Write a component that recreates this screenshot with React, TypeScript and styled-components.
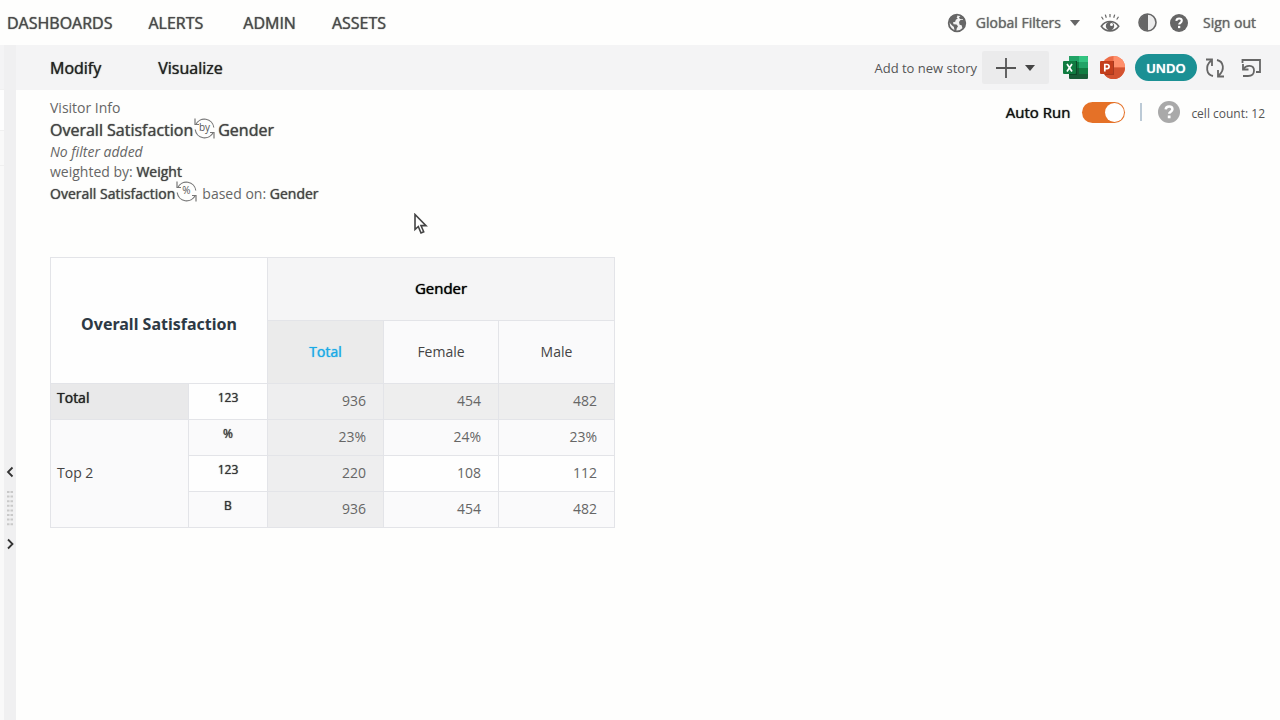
import React from "react";
import styled, { createGlobalStyle, css } from "styled-components";

const GlobalStyle = createGlobalStyle`
  *, *::before, *::after { box-sizing: border-box; }
  body {
    margin: 0;
    background: #fefefd;
    color: #4a4a4a;
    font-family: "Open Sans", "Noto Sans", sans-serif;
    font-size: 14px;
  }
  button { font: inherit; color: inherit; border: 0; padding: 0; background: none; cursor: pointer; }
  a { color: inherit; text-decoration: none; }
  svg { display: block; flex: none; }
`;

const heavy = css`
  text-shadow: 0 0 1px currentColor;
`;

const Page = styled.div`
  display: flex;
  flex-direction: column;
  min-height: 100vh;
`;

const TopBar = styled.header`
  display: flex;
  align-items: center;
  justify-content: space-between;
  height: 45px;
  padding: 0 24px 0 7px;
`;

const Nav = styled.nav`
  display: flex;
  gap: 36px;
  font-size: 16px;
  line-height: 22px;
  ${heavy}
`;

const NavLink = styled.a<{ $wide?: boolean }>`
  margin-right: ${(p) => (p.$wide ? "4px" : "0")};
`;

const Account = styled.div`
  display: flex;
  align-items: center;
  color: #666;
  line-height: 22px;
  ${heavy}
`;

const FilterButton = styled.button`
  display: flex;
  align-items: center;
  gap: 9px;
  margin-right: 20px;
  text-shadow: inherit;
`;

const IconButton = styled.button<{ $gap: number }>`
  margin-right: ${(p) => p.$gap}px;
`;

const Workspace = styled.div`
  display: flex;
  flex: 1;
`;

const Sliver = styled.div`
  display: flex;
  flex-direction: column;
  width: 4px;
  background: #f9f9f9;
`;

const SliverBlock = styled.div<{ $height: number; $color: string }>`
  height: ${(p) => p.$height}px;
  background: ${(p) => p.$color};
  border-bottom: 1px solid #f0f0f0;
`;

const Rail = styled.aside`
  display: flex;
  flex-direction: column;
  align-items: center;
  gap: 12px;
  width: 12px;
  padding-top: 421px;
  background: #f0f0f1;
  color: #333;
`;

const Main = styled.main`
  position: relative;
  flex: 1;
  min-width: 0;
`;

const Toolbar = styled.div`
  display: flex;
  align-items: center;
  justify-content: space-between;
  height: 45px;
  padding: 0 19px 0 34px;
  background: #f4f4f5;
`;

const Tabs = styled.div`
  display: flex;
  gap: 57px;
  color: #222;
  font-size: 16px;
  line-height: 22px;
`;

const Tab = styled.button`
  ${heavy}
`;

const Actions = styled.div`
  display: flex;
  align-items: center;
  color: #555;
  font-size: 13px;
`;

const StoryButton = styled.button`
  display: flex;
  align-items: center;
  justify-content: center;
  gap: 9px;
  width: 67px;
  height: 33px;
  margin: 0 14px 0 5px;
  border-radius: 2px;
  background: #ebebec;
  color: #444;
`;

const UndoButton = styled.button`
  width: 62px;
  height: 27px;
  margin-right: 8px;
  border-radius: 14px;
  background: #1b9094;
  color: #fff;
  font-weight: 600;
  ${heavy}
`;

const Summary = styled.section`
  display: flex;
  justify-content: space-between;
  align-items: flex-start;
  padding: 6px 15px 0 34px;
`;

const Lines = styled.div`
  display: flex;
  flex-direction: column;
  color: #666;
`;

const Line = styled.div<{ $title?: boolean; $italic?: boolean }>`
  display: flex;
  align-items: center;
  height: ${(p) => (p.$title ? 24 : p.$italic ? 18 : 22)}px;
  font-size: ${(p) => (p.$title ? 16 : 14)}px;
  font-style: ${(p) => (p.$italic ? "italic" : "normal")};
  white-space: pre;
`;

const Strong = styled.span`
  color: #444;
  ${heavy}
`;

const SwapButton = styled.button<{ $after: number }>`
  margin: 0 ${(p) => p.$after}px 4px 1px;
`;

const RunOptions = styled.div`
  display: flex;
  align-items: center;
  padding-top: 5px;
`;

const RunLabel = styled.label`
  display: flex;
  align-items: center;
  gap: 12px;
  color: #111;
  font-size: 15px;
  line-height: 22px;
  ${heavy}
`;

const Switch = styled.input`
  appearance: none;
  width: 43px;
  height: 21px;
  margin: 0;
  padding: 1px;
  border-radius: 11px;
  background: #e57127;
  display: flex;
  justify-content: flex-start;
  &:checked { justify-content: flex-end; }
  &::before {
    content: "";
    width: 19px;
    height: 19px;
    border-radius: 50%;
    background: #fff;
  }
`;

const Divider = styled.span`
  width: 2px;
  height: 18px;
  margin: 0 16px 0 15px;
  background: #bccad6;
`;

const CellCount = styled.span`
  padding-top: 3px;
  margin-left: 11px;
  font-size: 12px;
  line-height: 16px;
  color: #555;
`;

const Grid = styled.table`
  width: 565px;
  margin: 53px 0 0 34px;
  border-collapse: collapse;
  table-layout: fixed;
  th, td { border: 1px solid #e3e4e8; padding: 0 0 2px; font-weight: 400; }
`;

const CornerCell = styled.th`
  && { padding-top: 8px; font-weight: 700; }
  background: #fefefe;
  color: #2d3944;
  font-family: "Noto Sans", sans-serif;
  font-size: 16px;
`;

const GroupHead = styled.th`
  height: 63px;
  background: #f5f5f6;
  color: #000;
  font-size: 15px;
  ${heavy}
`;

const ColumnHead = styled.th<{ $total?: boolean }>`
  height: 63px;
  background: ${(p) => (p.$total ? "#ebebeb" : "#fafafb")};
  color: ${(p) => (p.$total ? "#1aaae6" : "#444")};
  ${(p) => p.$total && heavy}
`;

const RowHead = styled.th<{ $total?: boolean }>`
  && { padding: ${(p) => (p.$total ? "0 6px 8px" : "0 6px 2px")}; }
  background: ${(p) => (p.$total ? "#e9e9ea" : "#fafafb")};
  color: ${(p) => (p.$total ? "#222" : "#444")};
  text-align: left;
  ${(p) => p.$total && heavy}
`;

const MeasureHead = styled.th<{ $shade?: boolean }>`
  && { padding-bottom: 9px; }
  background: ${(p) => (p.$shade ? "#fafafb" : "#fefefe")};
  color: #333;
  font-size: 12px;
  ${heavy}
`;

const Value = styled.td<{ $tone: string }>`
  && { padding-right: 17px; }
  height: 36px;
  background: ${(p) => p.$tone};
  color: #666;
  text-align: right;
`;

const Pointer = styled.svg`
  position: absolute;
  left: 398px;
  top: 168px;
`;

const Caret = () => (
  <svg width="10" height="6" viewBox="0 0 10 6" aria-hidden="true">
    <path d="M0 0h10L5 6z" fill="currentColor" />
  </svg>
);

const HelpIcon = ({ size, color }: { size: number; color: string }) => (
  <svg width={size} height={size} viewBox="0 0 20 20" aria-hidden="true">
    <circle cx="10" cy="10" r="10" fill={color} />
    <path d="M7 7.7C7.2 5.7 8.4 5 10.1 5c1.8 0 3 1 3 2.5 0 2.3-2.9 2.2-2.9 4.2" fill="none" stroke="#fff" strokeWidth="2.3" />
    <rect x="8.9" y="13.2" width="2.5" height="2.5" fill="#fff" />
  </svg>
);

const GlobeIcon = () => (
  <svg width="20" height="20" viewBox="0 0 20 20" aria-hidden="true">
    <circle cx="10" cy="10" r="8.3" fill="#f3f3f3" stroke="#666" strokeWidth="1.8" />
    <path d="M2 7C3 4 6 1.6 9 1.500l1.600 1.300-1 1.700 1.200 1-2 1.200-.6 2-2.200.6.5 1.900 3 .3 1.500 1.800-1.200 2-.7 3.200-1.600-.8-.6-3.800-2.300-1.800L2 9z" fill="#666" />
    <path d="M12 4.200l2.300-1.700 2.800 2.800 1.400 4.300-.8 4-2.200 1.700-.9-3-2-.6-.6-2.600 1.500-2 2.200-.2.2-1-1.800.3-1.400-.5z" fill="#666" />
  </svg>
);

const EyeIcon = () => (
  <svg width="20" height="20" viewBox="0 0 20 20" fill="none" stroke="#666" aria-hidden="true">
    <path d="M1.500 3.700l1.800 2.800M5.300 1.600l1 3.200M10 1v3.200M14.700 1.600l-1 3.200M18.500 3.700l-1.800 2.800" strokeWidth="1.200" />
    <path d="M1.300 13.200C3.600 9.900 6.600 8.500 10 8.500s6.400 1.400 8.700 4.700c-2.300 3.300-5.300 4.700-8.700 4.700S3.600 16.500 1.300 13.200z" strokeWidth="1.600" />
    <circle cx="10" cy="13" r="4.200" fill="#666" stroke="none" />
    <circle cx="11.500" cy="11.600" r="1.500" fill="#fff" stroke="none" />
  </svg>
);

const ContrastIcon = () => (
  <svg width="19" height="19" viewBox="0 0 19 19" aria-hidden="true">
    <circle cx="9.500" cy="9.500" r="8.500" fill="#ececec" stroke="#666" strokeWidth="1.600" />
    <path d="M10 1a8.500 8.500 0 0 0 0 17z" fill="#666" />
  </svg>
);

const ExcelIcon = () => (
  <svg width="25" height="23" viewBox="0 0 25 23" aria-hidden="true">
    <rect x="6" y="0" width="19" height="23" rx="1" fill="#185c37" />
    <path d="M7 0h9v6H6V1z" fill="#21a366" />
    <path d="M16 0h8l1 1v5h-9z" fill="#33c481" />
    <rect x="6" y="6" width="10" height="6" fill="#107c41" />
    <rect x="16" y="6" width="9" height="6" fill="#21a366" />
    <rect x="16" y="12" width="9" height="6" fill="#107c41" />
    <rect x="6" y="5" width="8" height="14" fill="#0b4a28" />
    <rect x="0" y="5" width="13" height="13" rx="1" fill="#107c41" />
    <path d="M4 8l5 7.500M9 8l-5 7.500" stroke="#fff" strokeWidth="1.700" />
  </svg>
);

const PowerPointIcon = () => (
  <svg width="25" height="23" viewBox="0 0 25 23" aria-hidden="true">
    <circle cx="13.500" cy="11.500" r="11.500" fill="#ed6c47" />
    <path d="M13.500 0A11.500 11.500 0 0 1 25 11.500H13.500z" fill="#ff8f6b" />
    <path d="M2 11.500h23a11.500 11.500 0 0 1-23 0z" fill="#d35230" />
    <path d="M4 5h10v14H5z" fill="#a83a1f" />
    <rect x="0" y="5" width="13" height="13" rx="1" fill="#c43e1c" />
    <path d="M4.800 15.500v-7h2.200a2 2 0 0 1 0 4.200H4.800" fill="none" stroke="#fff" strokeWidth="1.700" />
  </svg>
);

const RefreshIcon = () => (
  <svg width="20" height="20" viewBox="0 0 20 20" fill="none" stroke="#666" strokeWidth="1.800" aria-hidden="true">
    <path d="M8 18C1.200 16.500 0 8 6 2.800M1 1.500h6V8" />
    <path d="M12 2C18.800 3.500 20 12 14 17.200M19 18.500h-6V12" />
  </svg>
);

const RevertIcon = () => (
  <svg width="20" height="20" viewBox="0 0 20 20" fill="none" stroke="#666" strokeWidth="1.800" aria-hidden="true">
    <path d="M1.500 5V2H19v12h-4" />
    <path d="M2 6v5.500h5.500" />
    <path d="M2.500 11C5 6.500 13 6.500 13 12.500c0 4-3 5.500-6 5.500H2" />
  </svg>
);

const SwapIcon = ({ label }: { label: string }) => (
  <svg width="21" height="21" viewBox="0 0 21 21" fill="none" stroke="#777" strokeWidth="1.200" aria-hidden="true">
    <path d="M1 0.500V6.500H5" />
    <path d="M1.800 6.500A9.500 9.500 0 0 1 19.800 9.500" />
    <path d="M20 20.500V14.500H16" />
    <path d="M19.200 14.500A9.500 9.500 0 0 1 1.200 11.500" />
    <text x="10.500" y="13" fontSize="10" textAnchor="middle" fill="#555" stroke="none">{label}</text>
  </svg>
);

const Chevron = ({ d }: { d: string }) => (
  <svg width="8" height="12" viewBox="0 0 8 12" fill="none" stroke="#333" strokeWidth="1.800" aria-hidden="true">
    <path d={d} />
  </svg>
);

const Grip = () => (
  <svg width="6" height="36" viewBox="0 0 6 36" fill="#c9c9c9" aria-hidden="true">
    {[0, 1, 2, 3, 4, 5, 6, 7].map((i) => (
      <path key={i} d={`M0 ${i * 4.6 + 1}h2.500v2H0zM3.500 ${i * 4.6 + 1}H6v2H3.500z`} />
    ))}
  </svg>
);

const measures = [
  { label: "%", values: ["23%", "24%", "23%"] },
  { label: "123", values: ["220", "108", "112"] },
  { label: "B", values: ["936", "454", "482"] },
];

export default function App() {
  return (
    <Page>
      <GlobalStyle />
      <TopBar>
        <Nav>
          <NavLink href="#dashboards">DASHBOARDS</NavLink>
          <NavLink href="#alerts" $wide>ALERTS</NavLink>
          <NavLink href="#admin">ADMIN</NavLink>
          <NavLink href="#assets">ASSETS</NavLink>
        </Nav>
        <Account>
          <FilterButton><GlobeIcon />Global Filters<Caret /></FilterButton>
          <IconButton $gap={18} aria-label="Views"><EyeIcon /></IconButton>
          <IconButton $gap={13} aria-label="Contrast"><ContrastIcon /></IconButton>
          <IconButton $gap={15} aria-label="Help"><HelpIcon size={18} color="#666" /></IconButton>
          <a href="#signout">Sign out</a>
        </Account>
      </TopBar>
      <Workspace>
        <Sliver>
          <SliverBlock $height={45} $color="#f4f4f5" />
          <SliverBlock $height={41} $color="#fefefe" />
          <SliverBlock $height={35} $color="#f9f9f9" />
        </Sliver>
        <Rail>
          <button aria-label="Collapse panel"><Chevron d="M6.500 1.500L2 6l4.500 4.500" /></button>
          <Grip />
          <button aria-label="Expand panel"><Chevron d="M2 1.500L6.500 6 2 10.500" /></button>
        </Rail>
        <Main>
          <Toolbar>
            <Tabs>
              <Tab>Modify</Tab>
              <Tab>Visualize</Tab>
            </Tabs>
            <Actions>
              Add to new story
              <StoryButton aria-label="Add to new story">
                <svg width="20" height="20" viewBox="0 0 20 20" stroke="#555" strokeWidth="1.800" aria-hidden="true">
                  <path d="M10 0v20M0 10h20" />
                </svg>
                <Caret />
              </StoryButton>
              <IconButton $gap={12} aria-label="Export to Excel"><ExcelIcon /></IconButton>
              <IconButton $gap={10} aria-label="Export to PowerPoint"><PowerPointIcon /></IconButton>
              <UndoButton>UNDO</UndoButton>
              <IconButton $gap={16} aria-label="Refresh"><RefreshIcon /></IconButton>
              <IconButton $gap={0} aria-label="Revert"><RevertIcon /></IconButton>
            </Actions>
          </Toolbar>
          <Summary>
            <Lines>
              <Line>Visitor Info</Line>
              <Line $title>
                <Strong>Overall Satisfaction</Strong>
                <SwapButton $after={3} aria-label="Swap axes"><SwapIcon label="by" /></SwapButton>
                <Strong>Gender</Strong>
              </Line>
              <Line $italic>No filter added</Line>
              <Line>weighted by: <Strong>Weight</Strong></Line>
              <Line>
                <Strong>Overall Satisfaction</Strong>
                <SwapButton $after={5} aria-label="Swap percentage base"><SwapIcon label="%" /></SwapButton>
                based on: <Strong>Gender</Strong>
              </Line>
            </Lines>
            <RunOptions>
              <RunLabel>Auto Run<Switch type="checkbox" role="switch" defaultChecked /></RunLabel>
              <Divider />
              <IconButton $gap={0} aria-label="Help"><HelpIcon size={22} color="#a9a9a9" /></IconButton>
              <CellCount>cell count: 12</CellCount>
            </RunOptions>
          </Summary>
          <Grid>
            <colgroup>
              <col width="138" /><col width="79" /><col width="116" /><col width="115" /><col width="116" />
            </colgroup>
            <thead>
              <tr>
                <CornerCell colSpan={2} rowSpan={2}>Overall Satisfaction</CornerCell>
                <GroupHead colSpan={3}>Gender</GroupHead>
              </tr>
              <tr>
                <ColumnHead $total>Total</ColumnHead>
                <ColumnHead>Female</ColumnHead>
                <ColumnHead>Male</ColumnHead>
              </tr>
            </thead>
            <tbody>
              <tr>
                <RowHead $total>Total</RowHead>
                <MeasureHead>123</MeasureHead>
                <Value $tone="#eeeeef">936</Value>
                <Value $tone="#eeeeee">454</Value>
                <Value $tone="#eeeeee">482</Value>
              </tr>
              {measures.map((m, i) => (
                <tr key={m.label}>
                  {i === 0 && <RowHead rowSpan={3}>Top 2</RowHead>}
                  <MeasureHead $shade={i !== 1}>{m.label}</MeasureHead>
                  {m.values.map((v, c) => (
                    <Value key={c} $tone={c === 0 ? "#eeeeef" : i === 1 ? "#fefefe" : "#fafafb"}>{v}</Value>
                  ))}
                </tr>
              ))}
            </tbody>
          </Grid>
          <Pointer width="14" height="22" viewBox="0 0 14 22" aria-hidden="true">
            <path d="M1 1.500v15l3.300-3 2.700 6.500 2.700-1.200-2.700-6.200h5z" fill="#fff" stroke="#444" strokeWidth="1.600" />
          </Pointer>
        </Main>
      </Workspace>
    </Page>
  );
}
